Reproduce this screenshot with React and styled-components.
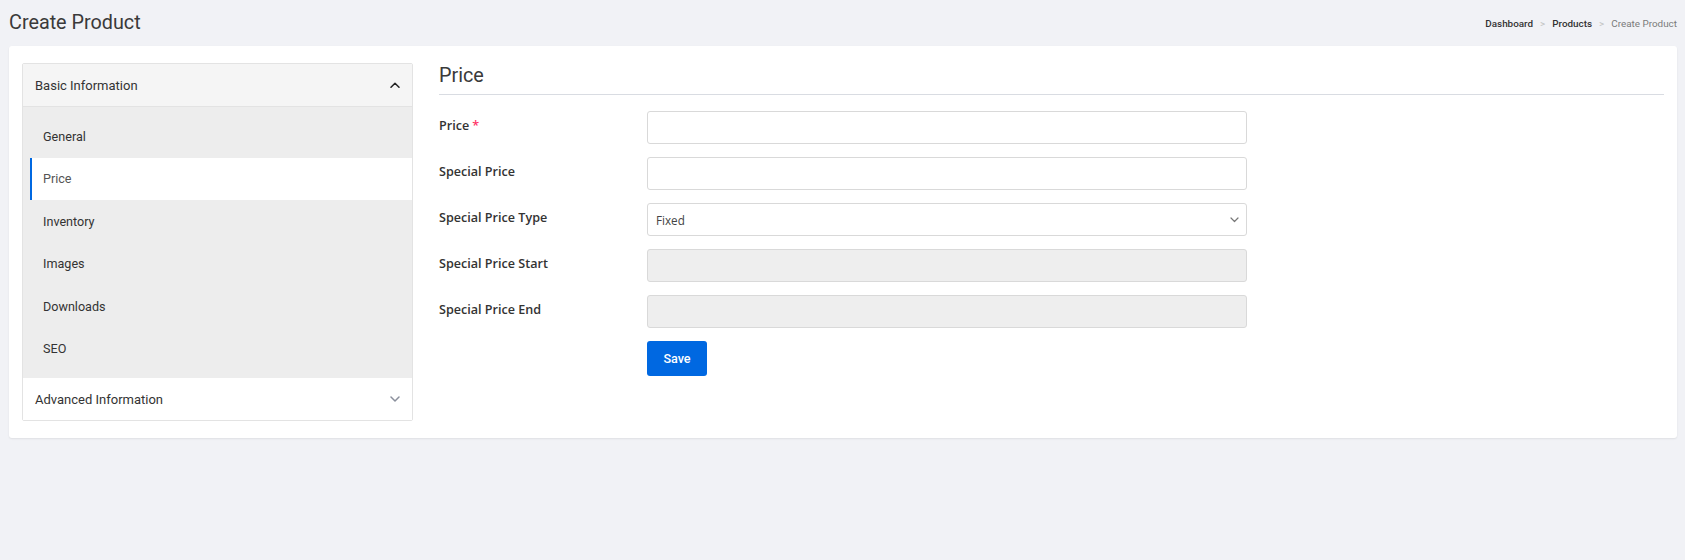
import React from 'react';
import styled, { createGlobalStyle } from 'styled-components';

const GlobalStyle = createGlobalStyle`
  body {
    margin: 0;
    background: #f1f2f6;
    font-family: Roboto, "Liberation Sans", sans-serif;
    color: #333;
  }
  * { box-sizing: border-box; }
`;

const Page = styled.div`
  min-height: 560px;
  padding: 0 8px 0 9px;
`;

const TopBar = styled.div`
  height: 46px;
  display: flex;
  align-items: center;
  justify-content: space-between;
`;

const PageTitle = styled.h1`
  margin: 0;
  font-size: 19.8px;
  font-weight: 400;
  color: #3a3a3a;
  line-height: 24px;
`;

const Crumbs = styled.ol`
  display: flex;
  align-items: center;
  margin: 0;
  padding: 0;
  list-style: none;
  font-size: 9.9px;

  li + li::before {
    content: '>';
    color: #c2c2c2;
    padding: 0 7px;
    font-weight: 400;
  }
`;

const Crumb = styled.li`
  color: ${p => (p.$current ? '#7a7a7a' : '#333')};
  font-weight: ${p => (p.$current ? 400 : 500)};
`;

const Card = styled.div`
  background: #fff;
  border-radius: 3px;
  box-shadow: 0 1px 2px rgba(0, 0, 0, 0.08);
  padding: 17px 13px 17px 13px;
  display: grid;
  grid-template-columns: 391px 1fr;
  gap: 26px;
  align-items: start;
`;

const Accordion = styled.div`
  border: 1px solid #e3e3e3;
  border-radius: 2px;
`;

const AccHeader = styled.div`
  height: ${p => (p.$open ? '43px' : '42px')};
  display: flex;
  align-items: center;
  justify-content: space-between;
  padding: 0 12px 0 12px;
  background: ${p => (p.$open ? '#f5f5f5' : '#fff')};
  border-bottom: ${p => (p.$open ? '1px solid #e3e3e3' : 'none')};
  font-size: 13px;
  color: #333;
`;

const TabList = styled.ul`
  margin: 0;
  padding: 8px 0 8px 7px;
  list-style: none;
  background: #ededed;
`;

const TabItem = styled.li`
  height: 42.5px;
  display: flex;
  align-items: center;
  padding-left: 11px;
  border-left: 2px solid ${p => (p.$active ? '#0068e1' : 'transparent')};
  background: ${p => (p.$active ? '#fff' : 'transparent')};
  font-size: 12.6px;
  color: ${p => (p.$active ? '#555' : '#333')};
`;

const Content = styled.div``;

const SectionTitle = styled.h3`
  margin: 0 0 16px;
  padding-bottom: 6px;
  border-bottom: 1px solid #d9dce2;
  font-size: 19.8px;
  font-weight: 400;
  line-height: 25px;
  color: #3a3a3a;
`;

const Row = styled.div`
  display: grid;
  grid-template-columns: 208px 600px;
  align-items: start;
  margin-bottom: 13px;
`;

const Label = styled.label`
  padding-top: 6px;
  font-family: "Open Sans", "Liberation Sans", sans-serif;
  font-size: 12.6px;
  font-weight: 600;
  color: #333;
`;

const Star = styled.span`
  color: #ff3366;
  margin-left: 3px;
`;

const Input = styled.input`
  display: block;
  width: 100%;
  height: 33px;
  border: 1px solid #d9d9d9;
  border-radius: 3px;
  background: ${p => (p.disabled ? '#eeeeee' : '#fff')};
  padding: 0 8px;
  font-family: "Open Sans", "Liberation Sans", sans-serif;
  font-size: 11.7px;
  outline: none;
`;

const SelectBox = styled.div`
  position: relative;
  height: 33px;
  border: 1px solid #d9d9d9;
  border-radius: 3px;
  display: flex;
  align-items: center;
  padding: 0 8px;
  font-family: "Open Sans", "Liberation Sans", sans-serif;
  font-size: 11.7px;
  color: #444;
`;

const Caret = styled.svg`
  position: absolute;
  right: 7px;
  top: 13px;
`;

const Actions = styled.div`
  padding-left: 208px;
`;

const SaveButton = styled.button`
  width: 60px;
  height: 35px;
  border: none;
  border-radius: 3px;
  background: #0068e1;
  color: #fff;
  font-family: Roboto, "Liberation Sans", sans-serif;
  font-size: 12.6px;
  font-weight: 500;
  cursor: pointer;
`;

const Chevron = ({ up, color }) => (
  <svg width="10" height="6" viewBox="0 0 10 6" fill="none">
    <path
      d={up ? 'M1 5.2 L5 1.2 L9 5.2' : 'M1 1 L5 5 L9 1'}
      stroke={color}
      strokeWidth="1.5"
      strokeLinecap="round"
      strokeLinejoin="round"
    />
  </svg>
);

const tabs = ['General', 'Price', 'Inventory', 'Images', 'Downloads', 'SEO'];

function App() {
  return (
    <Page>
      <GlobalStyle />
      <TopBar>
        <PageTitle>Create Product</PageTitle>
        <Crumbs>
          <Crumb>Dashboard</Crumb>
          <Crumb>Products</Crumb>
          <Crumb $current>Create Product</Crumb>
        </Crumbs>
      </TopBar>

      <Card>
        <Accordion>
          <AccHeader $open>
            Basic Information
            <Chevron up color="#222" />
          </AccHeader>
          <TabList>
            {tabs.map(t => (
              <TabItem key={t} $active={t === 'Price'}>{t}</TabItem>
            ))}
          </TabList>
          <AccHeader>
            Advanced Information
            <Chevron color="#8a8f9c" />
          </AccHeader>
        </Accordion>

        <Content>
          <SectionTitle>Price</SectionTitle>
          <Row>
            <Label>Price<Star>*</Star></Label>
            <Input type="text" />
          </Row>
          <Row>
            <Label>Special Price</Label>
            <Input type="text" />
          </Row>
          <Row>
            <Label>Special Price Type</Label>
            <SelectBox>
              Fixed
              <Caret width="9" height="6" viewBox="0 0 9 6" fill="none">
                <path d="M1 1 L4.5 4.5 L8 1" stroke="#777" strokeWidth="1.2" strokeLinecap="round" strokeLinejoin="round" />
              </Caret>
            </SelectBox>
          </Row>
          <Row>
            <Label>Special Price Start</Label>
            <Input type="text" disabled />
          </Row>
          <Row>
            <Label>Special Price End</Label>
            <Input type="text" disabled />
          </Row>
          <Actions>
            <SaveButton>Save</SaveButton>
          </Actions>
        </Content>
      </Card>
    </Page>
  );
}

export default App;
